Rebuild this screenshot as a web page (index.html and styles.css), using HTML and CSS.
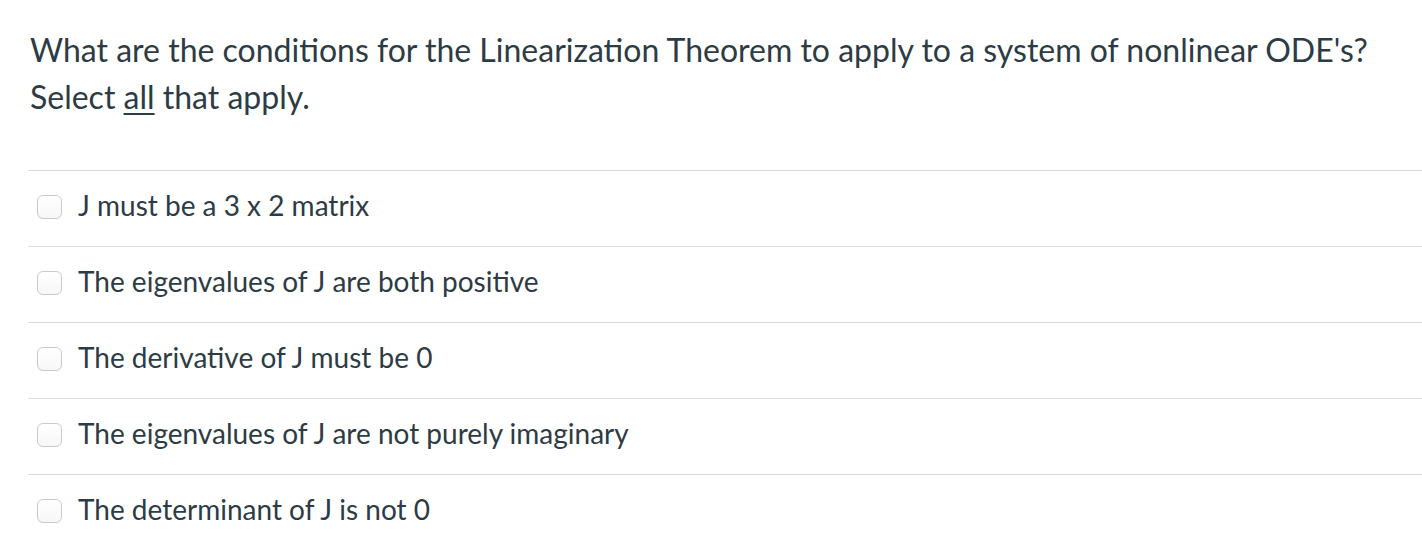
FILE: index.html
```html
<!DOCTYPE html>
<html>
<head>
<meta charset="utf-8">
<link rel="stylesheet" href="styles.css">
</head>
<body>
<div class="question">
  <div class="question-text">
    <p>What are the conditions for the Linearization Theorem to apply to a system of nonlinear ODE's?<br>Select <u>all</u> that apply.</p>
  </div>
  <div class="answers">
    <label class="answer"><span class="box"></span><span class="label">J must be a 3 x 2 matrix</span></label>
    <label class="answer"><span class="box"></span><span class="label">The eigenvalues of J are both positive</span></label>
    <label class="answer"><span class="box"></span><span class="label">The derivative of J must be 0</span></label>
    <label class="answer"><span class="box"></span><span class="label">The eigenvalues of J are not purely imaginary</span></label>
    <label class="answer"><span class="box"></span><span class="label">The determinant of J is not 0</span></label>
  </div>
</div>
</body>
</html>
```

FILE: styles.css
```css
html, body {
  margin: 0;
  padding: 0;
  background: #fff;
}
body {
  font-family: Lato, "Open Sans", sans-serif;
  color: #2d3b45;
}
.question {
  padding-left: 28px;
}
.question-text {
  padding-left: 2px;
  padding-top: 26px;
  height: 170px;
  box-sizing: border-box;
}
.question-text p {
  margin: 0;
  font-size: 32px;
  line-height: 47px;
}
.question-text u {
  text-decoration-thickness: 2px;
  text-underline-offset: 4px;
}
.answers {
  display: flex;
  flex-direction: column;
}
.answer {
  display: flex;
  align-items: center;
  height: 76px;
  border-top: 1px solid #dcdcdc;
  box-sizing: border-box;
  padding-left: 9px;
}
.box {
  width: 23px;
  height: 22px;
  border: 1px solid #c7cbce;
  border-radius: 6px;
  background: linear-gradient(#fff, #f7f7f7);
  flex: none;
  margin-right: 16px;
  margin-bottom: 4px;
}
.label {
  font-size: 28px;
  margin-bottom: 8px;
}
```
